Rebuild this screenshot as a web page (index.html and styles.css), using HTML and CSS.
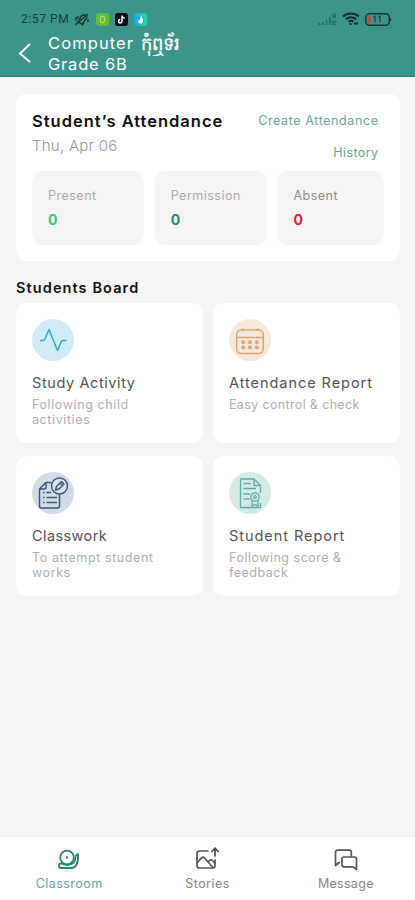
FILE: index.html
```html
<!DOCTYPE html>
<html lang="en">
<head>
<meta charset="UTF-8" />
<title>Classroom – Grade 6B</title>
<meta name="viewport" content="width=device-width, initial-scale=1" />
<link rel="stylesheet" href="styles.css">
</head>
<body>
  <header class="header">
    <div class="status">
      <span class="time">2:57 PM</span>
      <svg class="mute" width="16" height="15" viewBox="0 0 16 15" fill="none" stroke="#183c38" stroke-width="1.5">
        <path d="M4 10c3-2 1-6 5-7 3-.5 5 2 3 4-2 1-2 3-3 5zM7 12l2 1M1 13L14 2M2 5v4M4 4v3M14 7v3"/>
      </svg>
      <svg class="app" width="13" height="13" viewBox="0 0 13 13">
        <rect width="13" height="13" rx="3" fill="#65bd36"/>
        <rect x="4.4" y="3.4" width="4.2" height="6.2" rx="1.8" fill="none" stroke="#a9df75" stroke-width="1.2"/>
      </svg>
      <svg class="app" width="13" height="13" viewBox="0 0 13 13">
        <rect width="13" height="13" rx="3" fill="#0c0d13"/>
        <path d="M7 2.5v5.8a1.7 1.7 0 1 1-1.8-1.7M7 3c.3 1.4 1.2 2.2 2.7 2.3" fill="none" stroke="#fff" stroke-width="1.5"/>
      </svg>
      <svg class="app" width="13" height="13" viewBox="0 0 13 13">
        <defs><linearGradient id="drop" x1="0" x2="1"><stop stop-color="#16a9ef"/><stop offset="1" stop-color="#1fdc9c"/></linearGradient></defs>
        <rect width="13" height="13" rx="3" fill="url(#drop)"/>
        <path d="M7 2c.5 2 2 3 2 5.5S8.200 10.500 6.500 10.500 3.500 9.500 4 8l1.800-1z" fill="#fff"/>
      </svg>
      <svg class="signal" width="19" height="14" viewBox="0 0 19 14" fill="none" stroke="#286f67" stroke-width="1.8">
        <path d="M1.500 11v2M5 10v3M8.500 8v5M12 5v8M17 1v5M13.500 2l3 4M14 9l4 4M18 9l-4 4"/>
      </svg>
      <svg class="wifi" width="18" height="14" viewBox="0 0 18 14" fill="none" stroke="#102c2a" stroke-width="2">
        <path d="M1 4.500C5.500.5 12.500.5 17 4.500M3.800 7.300c3-2.600 7.400-2.600 10.400 0M6.500 9.800c1.500-1.200 3.500-1.200 5 0"/>
        <path d="M7.500 12h2M12 11.500h4"/>
      </svg>
      <svg class="battery" width="27" height="13" viewBox="0 0 27 13">
        <rect x=".8" y=".8" width="23.4" height="11.4" rx="3.5" fill="none" stroke="#153a36" stroke-width="1.5"/>
        <path d="M25 4.500l1.600 2-1.600 2z" fill="#153a36"/>
        <path d="M3 3.500h2.500v6H3z" fill="#e5392f"/>
        <path d="M8.500 4l1.500-.8v6.300M13.500 4l1.500-.8v6.300" fill="none" stroke="#1b4641" stroke-width="1.2"/>
      </svg>
    </div>
    <div class="title-row">
      <svg class="back" width="14" height="20" viewBox="0 0 14 20" fill="none" stroke="#fff" stroke-width="2">
        <path d="M12 1L2 10.500 12 19"/>
      </svg>
      <div class="class-name">
        <div class="name-line"><span class="subject">Computer</span><span class="khmer" lang="km">កុំឮទ័រ</span></div>
        <div class="grade">Grade 6B</div>
      </div>
    </div>
  </header>

  <main class="content">
    <section class="attendance">
      <div class="attendance-top">
        <div>
          <h1>Student’s Attendance</h1>
          <p class="date">Thu, Apr 06</p>
        </div>
        <div class="links">
          <a class="create">Create Attendance</a>
          <a class="history">History</a>
        </div>
      </div>
      <div class="stats">
        <div class="stat"><span>Present</span><b class="green">0</b></div>
        <div class="stat"><span>Permission</span><b class="teal">0</b></div>
        <div class="stat"><span class="absent">Absent</span><b class="red">0</b></div>
      </div>
    </section>

    <h2>Students Board</h2>

    <section class="board">
      <article class="card study">
        <svg class="icon" width="42" height="42" viewBox="0 0 42 42" fill="none">
          <circle cx="21" cy="21" r="21" fill="#cfecf8"/>
          <path d="M8 21.500h3c1 0 1.500-.5 2-1.500L17 10.500 25.500 31.500 29 23c.5-1 1-1.500 2-1.500h3.500" stroke="#35a8cf" stroke-width="1.6" stroke-linejoin="round"/>
        </svg>
        <h3>Study Activity</h3>
        <p>Following child<br>activities</p>
      </article>
      <article class="card attend">
        <svg class="icon" width="42" height="42" viewBox="0 0 42 42" fill="none">
          <circle cx="21" cy="21" r="21" fill="#f6e8db"/>
          <g stroke="#dda474" stroke-width="1.5">
            <rect x="7.7" y="11" width="26.6" height="23.5" rx="4.5"/>
            <path d="M8 18.500h26M13.500 9.500V12M28.500 9.500V12"/>
          </g>
          <path d="M14.200 23.300h.01M21 23.300h.01M27.800 23.300h.01M14.200 28.500h.01M21 28.500h.01M27.800 28.500h.01" stroke="#dda474" stroke-width="4" stroke-linecap="round"/>
        </svg>
        <h3>Attendance Report</h3>
        <p>Easy control &amp; check</p>
      </article>
      <article class="card work">
        <svg class="icon" width="42" height="42" viewBox="0 0 42 42" fill="none">
          <circle cx="21" cy="21" r="21" fill="#d2dbe8"/>
          <g stroke="#3d5681" stroke-width="1.5" stroke-linejoin="round">
            <path d="M19 10.500h-5L7.500 17v17c0 1.500.7 2 2 2h16c1.500 0 2-.7 2-2V22.500M14 10.500V15c0 1.300-.7 2-2 2H7.500"/>
            <path d="M11 20.500h1.500M14.500 20.500H19M11 25.500h1.500M14.500 25.500H25M11 30.500h1.500M14.500 30.500H25"/>
            <circle cx="27.5" cy="14" r="8" fill="#d9e4f2"/>
            <path d="M23.500 18l1-3.500 5-5 2.500 2.500-5 5zM28 11l2.500 2.500"/>
          </g>
        </svg>
        <h3>Classwork</h3>
        <p>To attempt student<br>works</p>
      </article>
      <article class="card report">
        <svg class="icon" width="42" height="42" viewBox="0 0 42 42" fill="none">
          <circle cx="21" cy="21" r="21" fill="#d2ebe7"/>
          <g stroke="#63aaa0" stroke-width="1.3" stroke-linejoin="round">
            <path d="M31.500 21v-7.500L25 7H11.500v28.500h20V31M25 7v6.500h6.500"/>
            <path d="M14.500 11.500H22M14.500 16.500H27M14.500 22H21M14.500 27H21"/>
            <circle cx="26" cy="25" r="4.2" fill="#d2ebe7"/>
            <circle cx="26" cy="25" r="1.3"/>
            <path d="M23 28.500V34l3-1.500 3 1.500v-5.500"/>
          </g>
        </svg>
        <h3>Student Report</h3>
        <p>Following score &amp;<br>feedback</p>
      </article>
    </section>
  </main>

  <nav class="tabs">
    <a class="tab active">
      <svg width="24" height="22" viewBox="0 0 24 22" fill="none" stroke="#23886f" stroke-width="1.8" stroke-linecap="round" stroke-linejoin="round">
        <circle cx="10" cy="8.5" r="6.8"/>
        <path d="M10 8v1M5 14.500H4c-1.500 0-2 .8-2 2.200 0 1.500.7 2.300 2 2.300h10c5 0 7.500-5 7-13M5 14.500c3 2 7 2 10 0 2.500-.5 3.500-3 3.500-7.500L21 5"/>
      </svg>
      <span>Classroom</span>
    </a>
    <a class="tab">
      <svg width="24" height="24" viewBox="0 0 24 24" fill="none" stroke="#555" stroke-width="1.7" stroke-linecap="round" stroke-linejoin="round">
        <path d="M13 4H4.500C2.800 4 2 4.800 2 6.500v12C2 20.200 2.800 21 4.500 21h13c1.700 0 2.500-.8 2.500-2.500V13"/>
        <path d="M2 16l4.500-5c1-1 2-1 3 0l8 9M13 15l1.500-1.500c1-1 2-1 3 0L20 16M20 9V1.500M16.800 4.500L20 1.200l3.200 3.300"/>
      </svg>
      <span>Stories</span>
    </a>
    <a class="tab">
      <svg width="24" height="22" viewBox="0 0 24 22" fill="none" stroke="#555" stroke-width="1.7" stroke-linejoin="round">
        <path d="M6 13.500H5l-3.500 3V3.500C1.500 2 2.200 1.200 3.500 1.200h11.800c1.300 0 2 .8 2 2.300V8"/>
        <path d="M8 10c0-1.300.7-2 2-2h10.500c1.300 0 2 .7 2 2v10.500L19 17.800h-9c-1.300 0-2-.7-2-2z"/>
      </svg>
      <span class="message">Message</span>
    </a>
  </nav>
</body>
</html>
```
FILE: styles.css
```css
:root {
  --teal: #3d9489;
  --bg: #f5f5f5;
  --grey: #aaa;
  --font: Inter, "Noto Sans", sans-serif;
}

* {
  box-sizing: border-box;
}

body {
  margin: 0;
  height: 900px;
  display: flex;
  flex-direction: column;
  background: var(--bg);
  font-family: var(--font);
  overflow: hidden;
}

h1, h2, h3, p { margin: 0; }
svg { flex: none; display: block; }

/* ------------ HEADER ------------- */
.header {
  height: 77px;
  background: var(--teal);
  border-bottom: 2px solid #248b7b;
  color: #fff;
}
.status {
  display: flex;
  align-items: center;
  height: 26px;
  padding: 12px 23px 0 21px;
}
.time {
  width: 50px;
  font: 400 12px/14px Roboto, sans-serif;
  letter-spacing: 0.6px;
  color: #163c38;
  white-space: nowrap;
}
.mute { margin: 0 6px 0 3px; }
.app { margin-right: 6px; }
.signal { margin-left: auto; }
.wifi { margin: 0 5px; }

.title-row {
  display: flex;
  align-items: flex-start;
  height: 49px;
  padding: 7px 0 0 18px;
  gap: 16px;
}
.back { margin-top: 10px; }
.class-name {
  font-size: 16.5px;
  line-height: 21px;
  white-space: nowrap;
}
.name-line {
  display: flex;
  height: 21px;
  gap: 7px;
}
.subject { letter-spacing: 1.1px; }
.grade { letter-spacing: 0.8px; }
.khmer {
  font-size: 18px;
  line-height: 21px;
  -webkit-text-stroke: 0.3px #fff;
}

/* ------------ ATTENDANCE ------------- */
.content {
  flex: 1;
  padding: 17px 15px 0 16px;
}
.attendance {
  height: 167px;
  padding: 15px 16px 16px;
  background: #fff;
  border-radius: 11px;
}
.attendance-top {
  display: flex;
  justify-content: space-between;
  height: 62px;
  padding-right: 6px;
}
h1 {
  font-size: 16.5px;
  font-weight: 600;
  line-height: 25px;
  letter-spacing: 1px;
  color: #111;
}
.date {
  font-size: 15px;
  font-weight: 300;
  line-height: 23px;
  letter-spacing: 0.25px;
  color: #999;
}
.links {
  display: flex;
  flex-direction: column;
  align-items: flex-end;
  padding-top: 2px;
  gap: 12px;
  font-size: 12.5px;
  line-height: 20px;
  color: #68a99b;
}
.create { letter-spacing: 0.6px; margin-right: -0.6px; }
.history { letter-spacing: 0.4px; margin-right: -0.4px; }

.stats {
  display: grid;
  grid-template-columns: 112px 112px 107px;
  gap: 10.7px;
}
.stat {
  display: flex;
  flex-direction: column;
  height: 74px;
  padding: 15px 16px;
  background: var(--bg);
  border-radius: 11px;
  font-size: 12.5px;
  line-height: 20px;
  letter-spacing: 0.5px;
  color: var(--grey);
}
.stat b {
  margin-top: 4px;
  font-size: 14px;
  font-weight: 700;
}
.green { color: #3bc77c; }
.teal { color: #258770; }
.red { color: #e51a3c; }
.absent { color: #8c8c8c; }

/* ------------ BOARD ------------- */
h2 {
  margin: 16px 0 5px;
  font-size: 14.5px;
  font-weight: 600;
  line-height: 21px;
  letter-spacing: 1.1px;
  color: #111;
}
.board {
  display: grid;
  grid-template-columns: 187px 187px;
  gap: 13px 10px;
}
.card {
  height: 140px;
  padding: 16px;
  background: #fff;
  border-radius: 10px;
}
.card h3 {
  margin-top: 12px;
  font-size: 14.5px;
  font-weight: 400;
  line-height: 20px;
  letter-spacing: 0.95px;
  color: #555;
  white-space: nowrap;
}
.card p {
  margin-top: 4px;
  font-size: 12.5px;
  font-weight: 400;
  line-height: 15px;
  letter-spacing: 0.6px;
  color: #b0b0b0;
  white-space: nowrap;
}
.study h3 { letter-spacing: 0.6px; }
.work h3 { letter-spacing: 0.4px; }
.attend p { letter-spacing: 0.35px; }
.report p { letter-spacing: 0.5px; }

/* ------------ TABS ------------- */
.tabs {
  display: grid;
  grid-template-columns: repeat(3, 1fr);
  height: 63px;
  background: #fff;
  box-shadow: 0 -1px 2px #e8e8e8;
}
.tab {
  display: flex;
  flex-direction: column;
  align-items: center;
  justify-content: flex-end;
  padding-bottom: 7px;
  gap: 3px;
  font-size: 12.5px;
  line-height: 19px;
  letter-spacing: 0.45px;
  color: #888;
}
.tab.active { color: #68a99b; }
.message { letter-spacing: 0.3px; }
```
